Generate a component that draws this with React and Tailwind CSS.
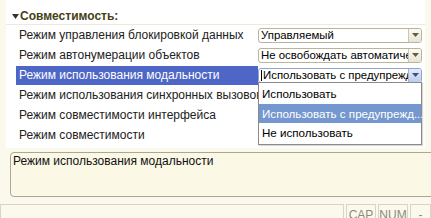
import React from "react";

const rows = [
  { label: "Режим управления блокировкой данных", value: "Управляемый" },
  { label: "Режим автонумерации объектов", value: "Не освобождать автоматиче" },
  { label: "Режим использования модальности", value: "Использовать с предупрежд", selected: true },
  { label: "Режим использования синхронных вызовов расширений" },
  { label: "Режим совместимости интерфейса" },
  { label: "Режим совместимости" },
];

function Arrow({ active }) {
  return (
    <div
      className={
        "w-[13px] h-full flex items-center justify-center rounded-r-[3px] border-l " +
        (active
          ? "bg-gradient-to-b from-[#e4ecfa] to-[#bccbea] border-[#9fb2d8]"
          : "bg-gradient-to-b from-[#fbfbf6] to-[#e6e4d6] border-[#c9c6b2]")
      }
    >
      <svg width="7" height="4" viewBox="0 0 7 4">
        <path d="M0 0H7L3.5 4Z" fill={active ? "#3d4f7a" : "#6b5a3a"} />
      </svg>
    </div>
  );
}

function Combo({ value, active }) {
  return (
    <div
      className={
        "h-[15px] w-[164px] flex items-stretch rounded-[3px] border bg-white " +
        (active ? "border-[#8fa3cf]" : "border-[#b9b49a]")
      }
    >
      <div className="flex-1 overflow-hidden whitespace-nowrap pl-[2px] leading-[13px] text-[11.4px] text-black flex items-center">
        {active && <span className="w-px h-[11px] bg-black mr-px shrink-0" />}
        <span>{value}</span>
      </div>
      <Arrow active={active} />
    </div>
  );
}

export default function App() {
  return (
    <div
      className="relative w-[431px] h-[218px] overflow-hidden bg-[#fbf9ec] text-[12px] text-[#222]"
      style={{ fontFamily: '"Liberation Sans", Arial, sans-serif' }}
    >
      <div className="ml-[6px] mr-[6px] h-[148px] bg-white flex flex-col">
        <div className="h-[25px] flex items-center pl-[6px] pt-[8px] border-b border-[#eeeadc]">
          <svg width="7" height="5" viewBox="0 0 7 5" className="mr-px">
            <path d="M0 0H7L3.5 5Z" fill="#333" />
          </svg>
          <span className="font-bold text-[#454216] leading-none">Совместимость:</span>
        </div>
        {rows.map((r, i) => (
          <div key={i} className="h-[20px] flex items-center">
            <div
              className={
                "ml-[10px] w-[242px] h-[19px] flex items-center pl-[3px] whitespace-nowrap overflow-hidden " +
                (r.selected ? "bg-[#4e66c6] text-white" : "")
              }
            >
              {r.label}
            </div>
            {r.value && <Combo value={r.value} active={r.selected} />}
          </div>
        ))}
      </div>

      <div className="mt-[4px] ml-[10px] mr-[-4px] h-[45px] rounded-[4px] border border-[#a9a69a] bg-[#fbf8e6] px-[2px] pt-px leading-[14px] text-[#111]">
        Режим использования модальности
      </div>

      <div className="absolute left-0 right-0 top-[204px] h-[16px] flex gap-[2px] text-[12px] text-[#8a8a80] leading-[14px]">
        <div className="w-[344px] border border-[#d8d5c4]" />
        <div className="w-[30px] border border-[#d8d5c4] text-center pt-[3px]">CAP</div>
        <div className="w-[30px] border border-[#d8d5c4] text-center pt-[3px]">NUM</div>
        <div className="flex-1 border border-[#d8d5c4] text-center pt-[3px]">-</div>
      </div>

      <div className="absolute left-[258px] top-[82px] w-[164px] h-[63px] border border-[#8a8a8a] bg-white flex flex-col py-px text-[11.6px] shadow-[1px_1px_1px_rgba(0,0,0,0.15)]">
        <div className="h-[20px] flex items-center pl-[3px] text-black">Использовать</div>
        <div className="h-[20px] flex items-center pl-[3px] bg-[#7597cf] text-white whitespace-nowrap">
          Использовать с предупрежд...
        </div>
        <div className="h-[20px] flex items-center pl-[3px] text-black">Не использовать</div>
      </div>
    </div>
  );
}
